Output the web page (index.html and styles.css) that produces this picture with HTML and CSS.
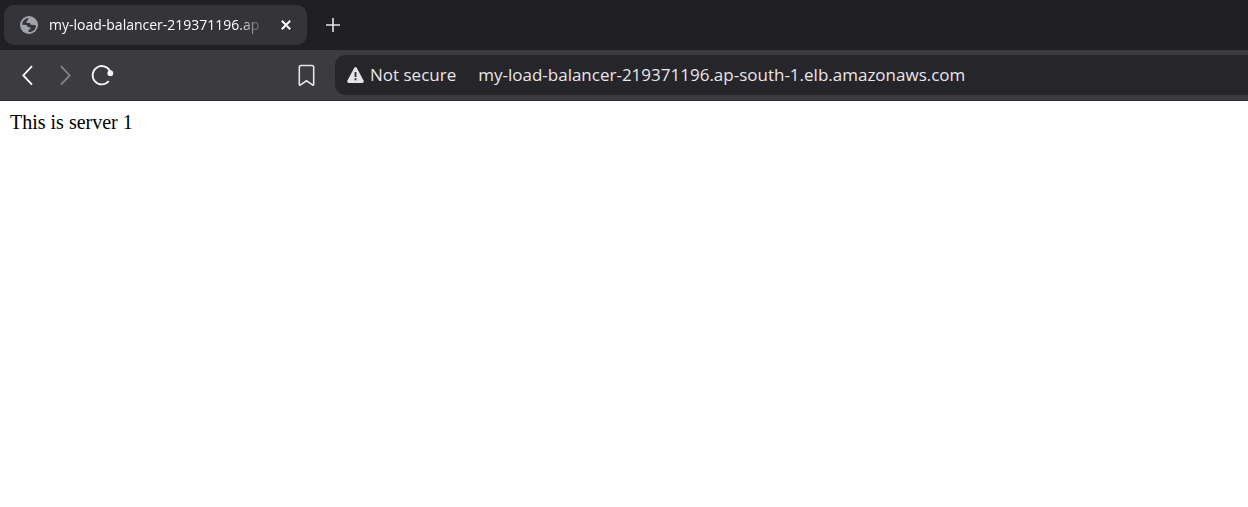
FILE: index.html
```html
<!DOCTYPE html>
<html lang="en">
<head>
<meta charset="utf-8">
<meta name="viewport" content="width=device-width, initial-scale=1">
<title>my-load-balancer-219371196.ap-south-1.elb.amazonaws.com</title>
<link rel="stylesheet" href="styles.css">
</head>
<body>
<header class="browser">
  <div class="tab-strip">
    <div class="tab">
      <svg class="tab-icon" viewBox="0 0 18 18" aria-hidden="true">
        <circle cx="9" cy="9" r="9" fill="#a0a4aa"/>
        <path d="M9.6 2C8.4 2.3 7.8 3.2 8.1 4.3L6.7 5.1C6.1 5.6 6.4 6.6 7.2 6.9L9.6 7.1C10.4 7.4 10.5 8.2 10.8 8.8L14.2 9.1C15.2 9.2 15.9 9.6 16 10.2C15.5 13.4 12.7 16 9.3 16L8.5 15.9L8.5 14.6C8.6 13.6 9.4 13.4 10.4 13.3C10.8 12.3 10.5 11.5 9.7 11.3L7.9 11.1C7.2 10.8 7.3 9.6 6.5 9.1L2.1 8.7C2.3 5 5.5 1.7 9.6 2Z" fill="#353439"/>
      </svg>
      <span class="tab-title">my-load-balancer-219371196.ap</span>
      <button class="tab-close" type="button" aria-label="Close tab">
        <svg class="close-icon" viewBox="0 0 10 10"><path d="M.8.8 9.2 9.2M9.2.8.8 9.2" fill="none" stroke="#fff" stroke-width="2"/></svg>
      </button>
    </div>
    <button class="new-tab" type="button" aria-label="New tab">
      <svg class="plus-icon" viewBox="0 0 14 14"><path d="M7 0V14M0 7H14" fill="none" stroke="#e4e3e7" stroke-width="1.6"/></svg>
    </button>
  </div>
  <nav class="toolbar" aria-label="Navigation">
    <div class="history">
      <button class="tool" type="button" aria-label="Back">
        <svg class="tool-icon" viewBox="0 0 24 24"><path d="M16 3.2 7.3 12.4 16 21.6" fill="none" stroke="#fff" stroke-width="1.8"/></svg>
      </button>
      <button class="tool" type="button" aria-label="Forward" disabled>
        <svg class="tool-icon" viewBox="0 0 24 24"><path d="M8 3.2 16.7 12.4 8 21.6" fill="none" stroke="#858489" stroke-width="1.8"/></svg>
      </button>
      <button class="tool" type="button" aria-label="Reload">
        <svg class="tool-icon" viewBox="0 0 24 24"><path d="M20 8A9.2 9.2 0 1 0 18.8 18.2" fill="none" stroke="#f5f5f6" stroke-width="1.8"/><circle cx="20.3" cy="10.2" r="2.9" fill="#f5f5f6"/></svg>
      </button>
    </div>
    <button class="tool" type="button" aria-label="Bookmark this page">
      <svg class="tool-icon" viewBox="0 0 24 24"><path d="M5.3 4.3Q5.3 2.5 7 2.5H18Q19.7 2.5 19.7 4.3V21.2Q19.7 22.8 18.5 21.8L12.5 17.8 6.5 21.8Q5.3 22.8 5.3 21.2Z" fill="none" stroke="#e7e6ea" stroke-width="1.6"/></svg>
    </button>
    <div class="address-bar">
      <button class="security" type="button">
        <svg class="warning-icon" viewBox="0 0 17 16" aria-hidden="true"><path d="M7.3.7Q8.5-.7 9.7.7L16.6 13.6Q17.2 16 15.2 16H1.8Q-.2 16 .4 13.6Z" fill="#e4e3e9"/><path d="M8.5 5V10M8.5 11.3V13.3" stroke="#29282d" stroke-width="1.8"/></svg>
        Not secure
      </button>
      <input class="url" type="text" aria-label="Address" value="my-load-balancer-219371196.ap-south-1.elb.amazonaws.com">
    </div>
  </nav>
</header>
<main class="page">This is server 1</main>
</body>
</html>
```
FILE: styles.css
```css
* {
  box-sizing: border-box;
}

body {
  margin: 0;
  background: #fff;
}

button,
input {
  margin: 0;
  padding: 0;
  border: 0;
  background: none;
  color: inherit;
  font: inherit;
}

svg {
  display: block;
  flex: none;
}

.browser {
  color: #e8e7ea;
  font-family: "Segoe UI", "Open Sans", "Noto Sans", sans-serif;
}

.tab-strip {
  display: flex;
  align-items: center;
  gap: 12px;
  height: 50px;
  padding: 0 4px;
  background: #201f24;
}

.tab {
  display: flex;
  align-items: center;
  flex: 0 1 303px;
  min-width: 0;
  height: 40px;
  padding: 0 10px 0 16px;
  border-radius: 10px;
  background: #353439;
}

.tab-icon {
  width: 18px;
  height: 18px;
  margin-right: 11px;
}

.tab-title {
  flex: 1;
  min-width: 0;
  overflow: hidden;
  font-size: 14px;
  line-height: 20px;
  white-space: nowrap;
  color: #fff;
  mask-image: linear-gradient(to left, transparent, #000 28px);
}

.tab-close {
  display: grid;
  place-items: center;
  width: 22px;
  height: 22px;
  margin-left: 10px;
}

.close-icon {
  width: 10px;
  height: 10px;
}

.new-tab {
  display: grid;
  place-items: center;
  width: 28px;
  height: 28px;
}

.plus-icon {
  width: 14px;
  height: 14px;
}

.toolbar {
  display: flex;
  align-items: center;
  height: 51px;
  padding-left: 14px;
  background: #3c3b40;
  border-bottom: 1px solid #2c2b30;
}

.history {
  display: flex;
  gap: 9px;
  margin-right: 176px;
}

.tool {
  display: grid;
  place-items: center;
  width: 28px;
  height: 28px;
}

.tool-icon {
  width: 24px;
  height: 24px;
}

.address-bar {
  display: flex;
  align-items: center;
  flex: 1;
  min-width: 0;
  height: 40px;
  margin-left: 15px;
  padding-left: 12px;
  border-radius: 10px 0 0 10px;
  background: #26252a;
  font-size: 17px;
  line-height: 24px;
}

.security {
  display: flex;
  align-items: center;
  gap: 6px;
  margin-right: 22px;
  white-space: nowrap;
}

.warning-icon {
  width: 17px;
  height: 16px;
}

.url {
  flex: 1;
  min-width: 0;
}

.page {
  padding: 9px 10px;
  color: #000;
  font-family: "Liberation Serif", "Times New Roman", serif;
  font-size: 20px;
  line-height: 24px;
}
```
